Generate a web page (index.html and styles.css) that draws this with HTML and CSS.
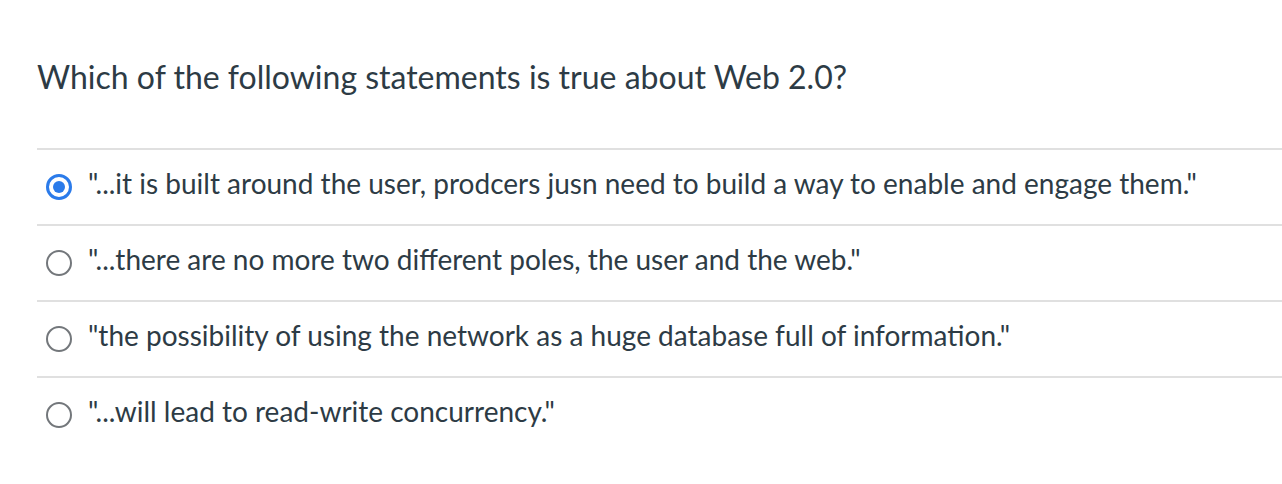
FILE: index.html
```html
<!DOCTYPE html>
<html>
<head>
<meta charset="utf-8">
<link rel="stylesheet" href="styles.css">
</head>
<body>
<div class="question">
  <div class="q-text">Which of the following statements is true about Web 2.0?</div>
  <div class="answers">
    <label class="answer">
      <span class="radio checked"></span>
      <span class="a-text">"...it is built around the user, prodcers jusn need to build a way to enable and engage them."</span>
    </label>
    <label class="answer">
      <span class="radio"></span>
      <span class="a-text">"...there are no more two different poles, the user and the web."</span>
    </label>
    <label class="answer">
      <span class="radio"></span>
      <span class="a-text">"the possibility of using the network as a huge database full of information."</span>
    </label>
    <label class="answer">
      <span class="radio"></span>
      <span class="a-text">"...will lead to read-write concurrency."</span>
    </label>
  </div>
</div>
</body>
</html>
```

FILE: styles.css
```css
html, body {
  margin: 0;
  padding: 0;
  background: #fff;
}
body {
  font-family: Lato, "Liberation Sans", sans-serif;
  color: #2d3b45;
}
.question {
  padding: 58px 0 0 37px;
}
.q-text {
  font-size: 32px;
  line-height: 38px;
}
.answers {
  margin-top: 52px;
  border-top: 2px solid #e0e0e0;
}
.answer {
  display: flex;
  align-items: center;
  height: 74px;
  border-bottom: 2px solid #e0e0e0;
  padding-left: 9px;
}
.answer:last-child {
  border-bottom: none;
}
.radio {
  box-sizing: border-box;
  width: 26px;
  height: 26px;
  border-radius: 50%;
  border: 2px solid #73777b;
  flex: none;
  margin-right: 16px;
  position: relative;
}
.radio.checked {
  border: 3px solid #2b7bea;
  background: #fff;
}
.radio.checked::after {
  content: "";
  position: absolute;
  left: 4px;
  top: 4px;
  width: 12px;
  height: 12px;
  border-radius: 50%;
  background: #2b7bea;
}
.a-text {
  font-size: 28px;
  line-height: 34px;
  padding-bottom: 8px;
}
```
